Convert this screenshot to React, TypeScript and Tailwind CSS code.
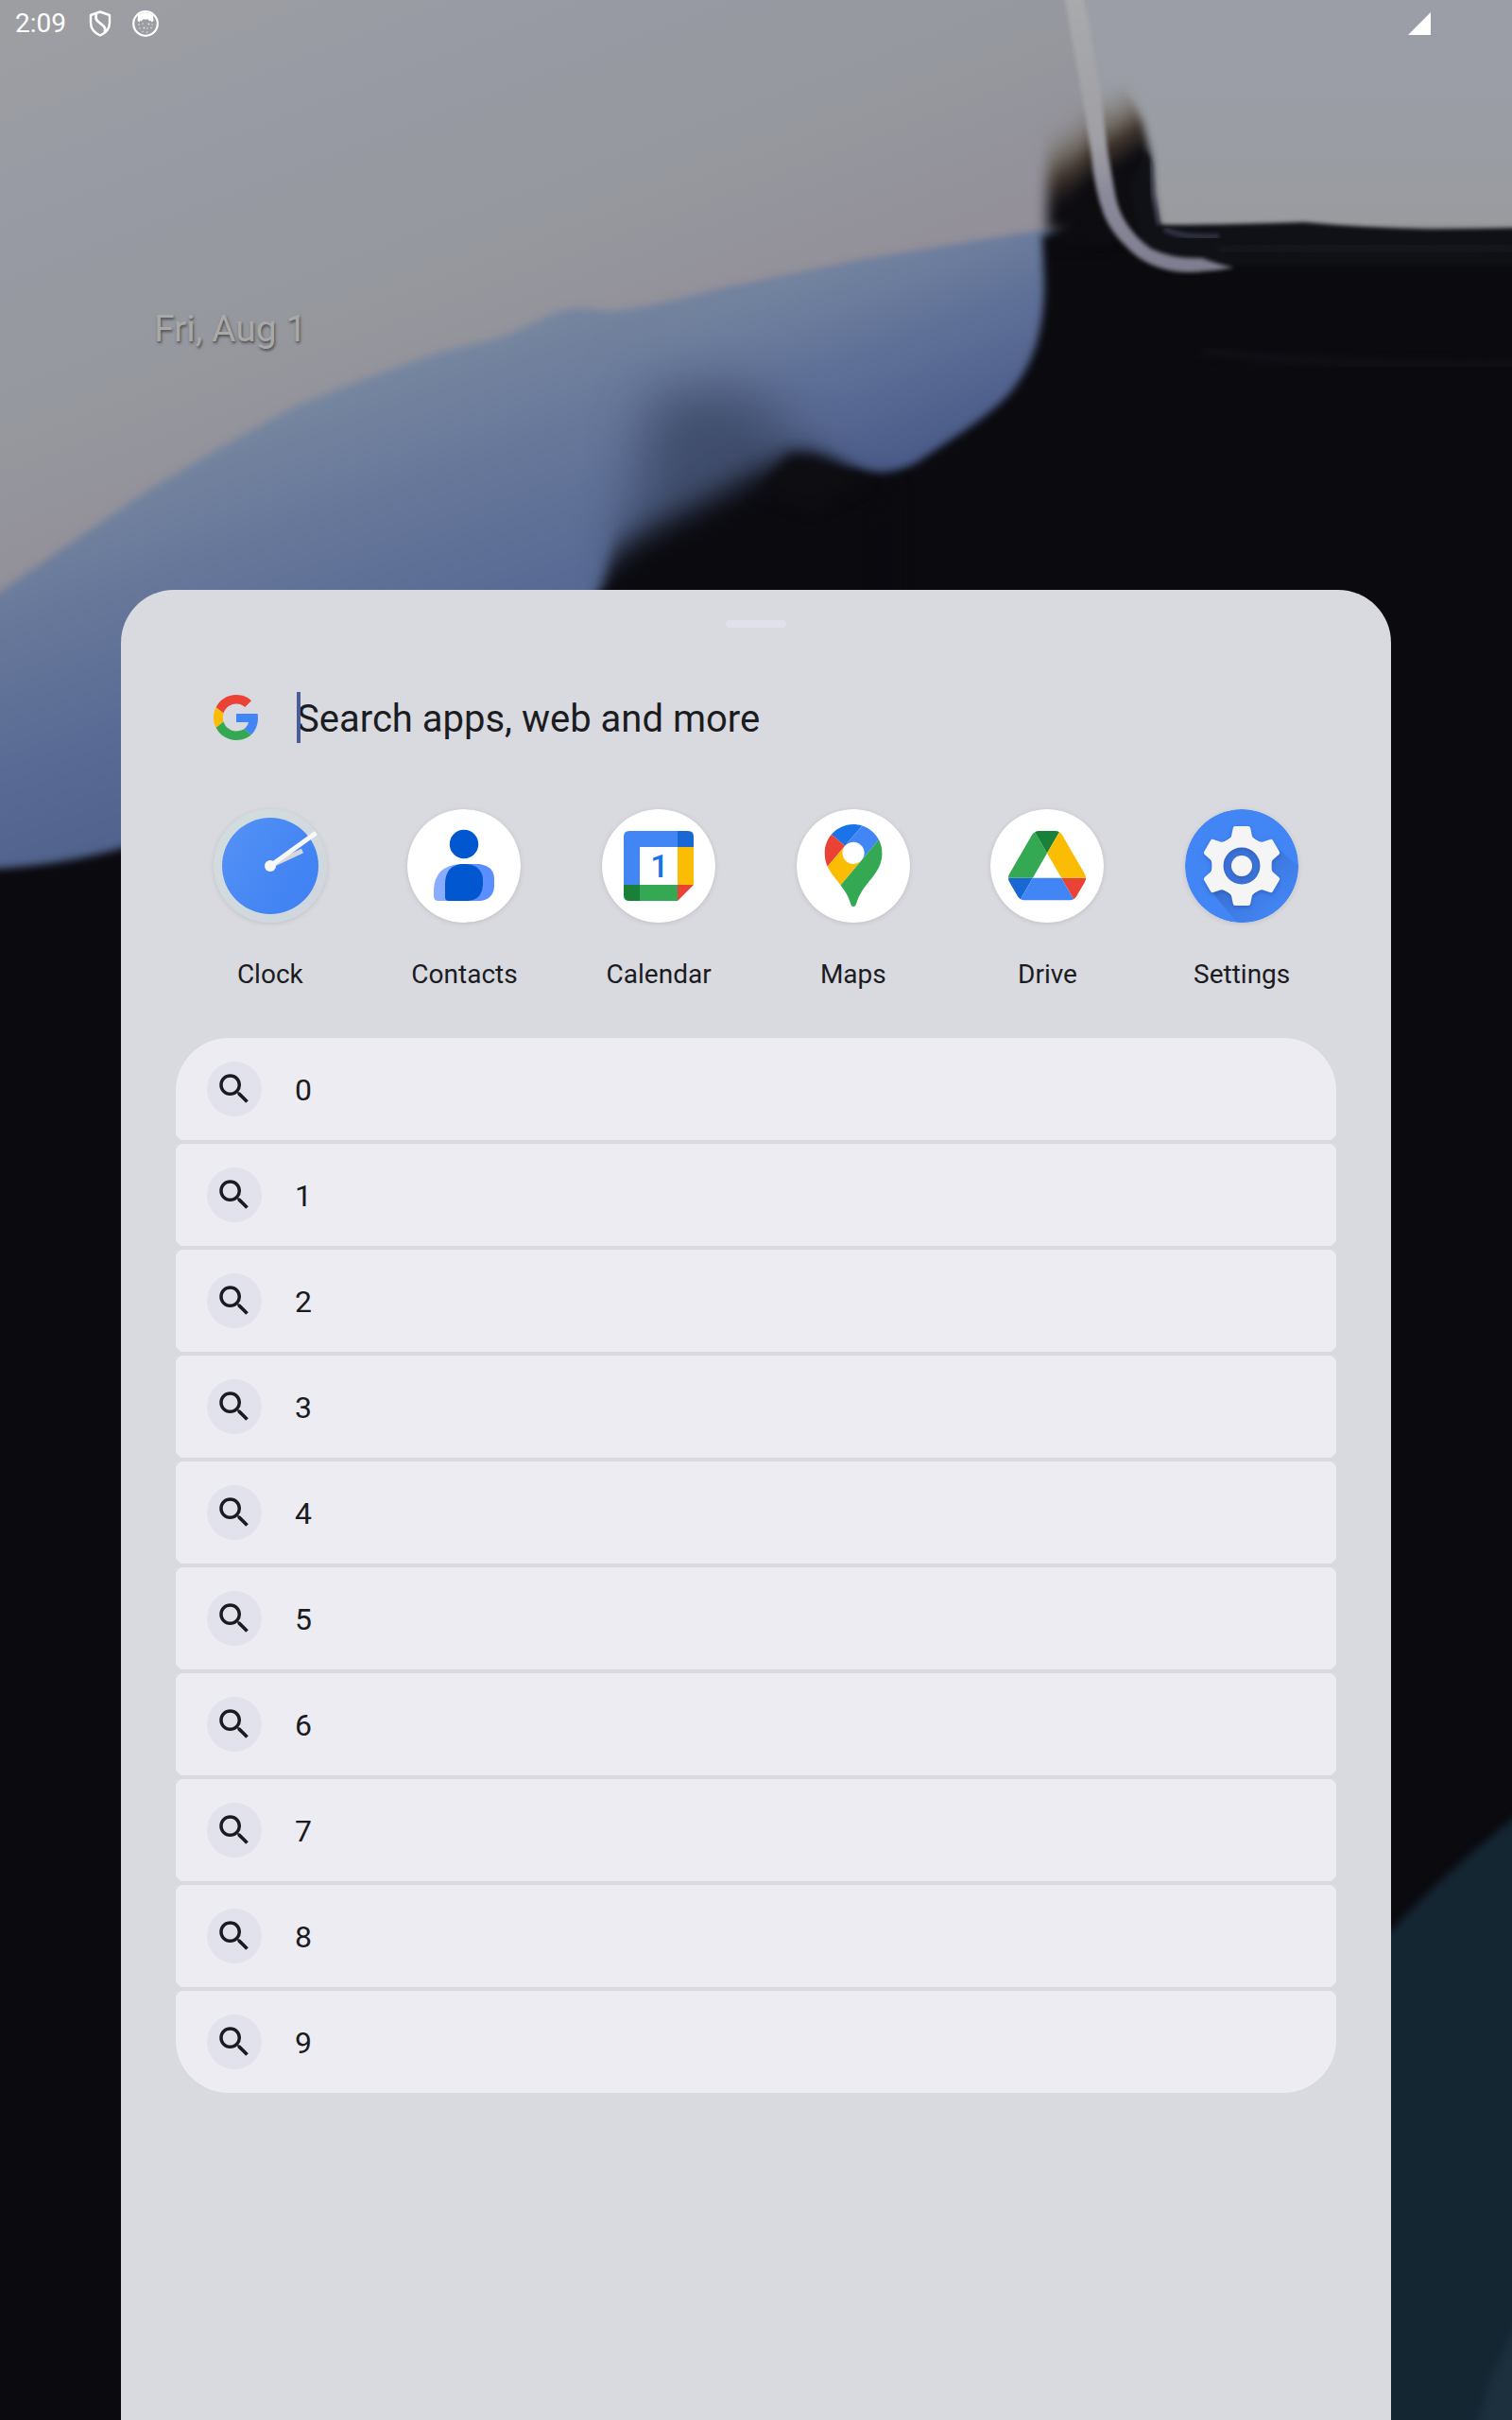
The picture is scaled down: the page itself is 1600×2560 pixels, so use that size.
import React from "react";

function Wallpaper() {
  return (
    <svg
      aria-hidden="true"
      className="absolute inset-0 h-full w-full"
      viewBox="0 0 1600 2560"
      preserveAspectRatio="xMidYMin slice"
      colorInterpolationFilters="sRGB"
    >
      <defs>
        <linearGradient id="haze" gradientUnits="userSpaceOnUse" x1="100" y1="0" x2="300" y2="520">
          <stop offset="0" stopColor="#9d9ea2" />
          <stop offset="0.3" stopColor="#989ba4" />
          <stop offset="0.75" stopColor="#95979d" />
          <stop offset="1" stopColor="#93909a" />
        </linearGradient>
        <linearGradient id="hazeRight" gradientUnits="userSpaceOnUse" x1="1350" y1="0" x2="1350" y2="240">
          <stop offset="0" stopColor="#9b9ea7" />
          <stop offset="0.6" stopColor="#9a9da4" />
          <stop offset="1" stopColor="#999b9f" />
        </linearGradient>
        <linearGradient id="blue" gradientUnits="userSpaceOnUse" x1="330" y1="420" x2="500" y2="900">
          <stop offset="0" stopColor="#76869f" />
          <stop offset="0.25" stopColor="#67779a" />
          <stop offset="0.5" stopColor="#5a6c95" />
          <stop offset="1" stopColor="#475a86" />
        </linearGradient>
        <linearGradient id="blueRight" gradientUnits="userSpaceOnUse" x1="870" y1="285" x2="950" y2="500">
          <stop offset="0" stopColor="#73849f" />
          <stop offset="0.45" stopColor="#5f7098" />
          <stop offset="1" stopColor="#4a5a88" />
        </linearGradient>
        <linearGradient id="blueFade" gradientUnits="userSpaceOnUse" x1="620" y1="0" x2="860" y2="0">
          <stop offset="0" stopColor="#fff" stopOpacity="0" />
          <stop offset="1" stopColor="#fff" />
        </linearGradient>
        <mask id="rightOnly" maskUnits="userSpaceOnUse" x="0" y="0" width="1600" height="1000">
          <rect width="1600" height="1000" fill="url(#blueFade)" />
        </mask>
        <linearGradient id="ember" gradientUnits="userSpaceOnUse" x1="1121" y1="124" x2="1163" y2="190">
          <stop offset="0" stopColor="#8f8e8e" stopOpacity="0" />
          <stop offset="0.4" stopColor="#6c6459" stopOpacity="0.65" />
          <stop offset="0.68" stopColor="#3c3129" stopOpacity="0.95" />
          <stop offset="1" stopColor="#0e0d12" />
        </linearGradient>
        <linearGradient id="streak" gradientUnits="userSpaceOnUse" x1="1140" y1="0" x2="1200" y2="290">
          <stop offset="0" stopColor="#a9aaac" />
          <stop offset="0.5" stopColor="#a0a0a5" />
          <stop offset="0.7" stopColor="#8b8a9a" />
          <stop offset="1" stopColor="#7f7e90" />
        </linearGradient>
        <filter id="b2" x="-10%" y="-10%" width="120%" height="120%"><feGaussianBlur stdDeviation="2" /></filter>
        <filter id="b4" x="-10%" y="-10%" width="120%" height="120%"><feGaussianBlur stdDeviation="4" /></filter>
        <filter id="b7" x="-50%" y="-50%" width="200%" height="200%"><feGaussianBlur stdDeviation="7" /></filter>
        <filter id="b16" x="-50%" y="-50%" width="200%" height="200%"><feGaussianBlur stdDeviation="16" /></filter>
        <filter id="b28" x="-50%" y="-50%" width="200%" height="200%"><feGaussianBlur stdDeviation="28" /></filter>
        <mask id="besideLobe" maskUnits="userSpaceOnUse" x="500" y="300" width="600" height="400">
          <path d="M620 660Q646 605 646 560L630 470V340H960V660Z" fill="#fff" filter="url(#b7)" />
        </mask>
      </defs>
      <rect width="1600" height="2560" fill="#0a0a0f" />
      <rect width="1600" height="700" fill="url(#haze)" />
      <rect x="1150" width="450" height="300" fill="url(#hazeRight)" />
      <path
        d="M-30 646L0 626L71 577L156 519L232 474L312 430Q400 394 469 372L527 358Q560 345 580 334Q600 325 616 326L647 330Q690 325 765 306L918 275L1120 242V960H-30Z"
        fill="url(#blue)"
        filter="url(#b4)"
      />
      <g mask="url(#rightOnly)">
        <path
          d="M580 336Q600 327 616 328L647 332Q690 327 765 308L918 277L1120 244V620H560Z"
          fill="url(#blueRight)"
          filter="url(#b4)"
        />
      </g>
      <path d="M690 420Q770 400 820 430L850 480L700 600L660 600Z" fill="#37435f" opacity="0.75" filter="url(#b28)" />
      <path
        d="M1103 250L1150 235L1228 245H1620V2600H-30V920Q70 918 160 888L610 650L634 628L700 600L800 550L870 500L905 496Q920 500 934 500Q950 499 969 490L1020 456Q1058 430 1071 413Q1106 370 1105 300Z"
        fill="#0a0a0f"
        filter="url(#b4)"
      />
      <g mask="url(#besideLobe)">
        <path
          d="M600 660L630 600L672 568L748 528L800 498L850 480L900 512L940 520V680H600Z"
          fill="#0a0a0f"
          filter="url(#b16)"
        />
        <path d="M835 480Q865 476 895 492L920 510L860 540L800 520Z" fill="#0d0d12" filter="url(#b7)" />
      </g>
      <path d="M1108 244V80H1170V250Z" fill="url(#ember)" filter="url(#b7)" />
      <path
        d="M1150 258L1150 80H1180Q1202 106 1210 132L1218 168L1220 205L1226 238L1240 256Z"
        fill="url(#ember)"
        filter="url(#b4)"
      />
      <path d="M1125 240L1160 205L1170 260H1112Z" fill="#0c0c11" filter="url(#b7)" />
      <path
        d="M1212 160L1217 168L1219 205L1227 238Q1300 238 1380 235Q1440 241 1510 243Q1570 243 1620 241V280H1215L1195 200Z"
        fill="#101116"
        filter="url(#b2)"
      />
      <path d="M1218 172L1220 205L1226 238" stroke="#45475a" strokeWidth="3" fill="none" filter="url(#b2)" />
      <path d="M1232 242Q1250 252 1290 250" stroke="#35384a" strokeWidth="5" fill="none" filter="url(#b2)" />
      <path d="M1290 266Q1450 256 1620 264" stroke="#16171b" strokeWidth="14" fill="none" filter="url(#b4)" />
      <path d="M1270 370Q1380 388 1620 386" stroke="#121318" strokeWidth="8" fill="none" filter="url(#b4)" />
      <path
        d="M1126 -5L1145 100L1155 165Q1158 200 1168 227Q1176 246 1191 260Q1214 286 1255 288Q1280 288 1306 283Q1290 280 1272 273Q1240 274 1218 263Q1186 240 1180 205L1172 160L1165 100L1147 -5Z"
        fill="url(#streak)"
        filter="url(#b2)"
      />
      <path d="M1440 2064L1472 2042Q1534 1975 1620 1909V2600H1440Z" fill="#152633" filter="url(#b4)" />
      <path d="M1562 2575Q1575 2500 1620 2440V2600Z" fill="#1c303d" filter="url(#b4)" />
    </svg>
  );
}

function StatusBar() {
  return (
    <header className="flex h-[50px] items-center pr-[86px] pl-4 text-white">
      <time className="text-[28px] leading-8">2:09</time>
      <svg aria-hidden="true" className="ml-6 h-7 w-6" viewBox="0 0 24 28" fill="none" stroke="#fff" strokeWidth="2.4">
        <path d="M12 1.500L22 5V13Q22 22 12 26.500Q2 22 2 13V5Z" strokeLinejoin="round" />
        <path d="M8 3.500Q6.500 9 9.500 11.500L15.500 16.500Q18.500 19.500 16.500 23" strokeWidth="2.800" />
      </svg>
      <svg aria-hidden="true" className="ml-[22px] size-7" viewBox="0 0 28 28">
        <circle cx="14" cy="14" r="12.8" fill="none" stroke="#fff" strokeWidth="2.2" />
        <path d="M6 5Q14 -1 22 5L22.500 11L20.500 12.500L19.500 10.500L18 11.500L17 9.500H11L10 11.500L8.500 10.500L7.500 12.500L5.500 11Z" fill="#fff" />
        <g fill="#fff" opacity="0.75">
          <circle cx="7" cy="15" r="0.8" /><circle cx="11" cy="14" r="0.7" /><circle cx="17.500" cy="14.500" r="0.9" />
          <circle cx="21" cy="15" r="0.7" /><circle cx="8" cy="19" r="0.7" /><circle cx="12.500" cy="18.500" r="0.9" />
          <circle cx="16" cy="19" r="0.8" /><circle cx="20" cy="18.500" r="0.8" /><circle cx="11" cy="22.500" r="0.7" />
          <circle cx="15.500" cy="23" r="0.8" />
        </g>
      </svg>
      <svg aria-hidden="true" className="ml-auto size-6" viewBox="0 0 24 24">
        <path d="M24 0V24H0Z" fill="#fff" />
      </svg>
    </header>
  );
}

function GoogleLogo() {
  return (
    <svg aria-hidden="true" className="size-12 shrink-0" viewBox="0 0 48 48">
      <path fill="#EA4335" d="M24 9.5c3.54 0 6.71 1.22 9.21 3.6l6.85-6.85C35.9 2.38 30.47 0 24 0 14.62 0 6.51 5.38 2.56 13.22l7.98 6.19C12.43 13.72 17.74 9.5 24 9.5z" />
      <path fill="#4285F4" d="M46.98 24.55c0-1.57-.15-3.09-.38-4.55H24v9.02h12.94c-.58 2.96-2.26 5.48-4.78 7.18l7.73 6c4.51-4.18 7.09-10.36 7.09-17.65z" />
      <path fill="#FBBC05" d="M10.53 28.59c-.48-1.45-.76-2.99-.76-4.59s.27-3.14.76-4.59l-7.98-6.19C.92 16.46 0 20.12 0 24c0 3.88.92 7.54 2.56 10.78l7.97-6.19z" />
      <path fill="#34A853" d="M24 48c6.48 0 11.93-2.13 15.89-5.81l-7.73-6c-2.15 1.45-4.92 2.3-8.16 2.3-6.26 0-11.57-4.22-13.47-9.91l-7.98 6.19C6.51 42.62 14.62 48 24 48z" />
    </svg>
  );
}

function ClockIcon() {
  return (
    <>
      <defs>
        <linearGradient id="clockFace" x1="0" y1="0.2" x2="1" y2="0.8">
          <stop offset="0" stopColor="#5491f5" />
          <stop offset="0.5" stopColor="#4788f4" />
          <stop offset="1" stopColor="#4081f4" />
        </linearGradient>
        <linearGradient id="clockRing" x1="0" y1="0" x2="1" y2="1">
          <stop offset="0" stopColor="#d3dddd" />
          <stop offset="1" stopColor="#cfd6df" />
        </linearGradient>
      </defs>
      <circle cx="60" cy="60" r="60" fill="url(#clockRing)" />
      <circle cx="60" cy="60" r="51" fill="url(#clockFace)" />
      <path d="M60 60L94 44" stroke="#d6d7da" strokeWidth="5" />
      <path d="M60 60L108.500 25" stroke="#f8f8fa" strokeWidth="5" />
      <circle cx="60" cy="60" r="6" fill="#f8f8fa" />
    </>
  );
}

function ContactsIcon() {
  return (
    <>
      <circle cx="60" cy="60" r="60" fill="#fff" />
      <path d="M56 58H60V97H33Q28 97 28 92V85Q29 60 56 58Z" fill="#8aacff" />
      <path d="M60 58H76Q92 60 92 74V82Q91 96 76 97H60Z" fill="#5b8fff" />
      <path d="M62 58Q80 59 80 76V80Q79 96 64 97H44Q40 97 40 93V78Q41 59 58 58Z" fill="#0057cf" />
      <circle cx="60" cy="37" r="15.2" fill="#0057cf" />
    </>
  );
}

function CalendarIcon() {
  return (
    <>
      <circle cx="60" cy="60" r="60" fill="#fff" />
      <path d="M29 23H80V40H40V80H23V29Q23 23 29 23Z" fill="#4285f4" />
      <path d="M80 23H91Q97 23 97 29V40H80Z" fill="#1967d2" />
      <path d="M80 40H97V80H80Z" fill="#fbbc04" />
      <path d="M40 80H80V97H40Z" fill="#34a853" />
      <path d="M23 80H40V97H29Q23 97 23 91Z" fill="#188038" />
      <path d="M80 80H97L80 97Z" fill="#ea4335" />
      <text x="61" y="72" textAnchor="middle" fontSize="34" fontWeight="500" fill="#1a73e8">1</text>
    </>
  );
}

function MapsIcon() {
  return (
    <>
      <circle cx="60" cy="60" r="60" fill="#fff" />
      <g transform="translate(29.700 16) scale(0.657)">
        <path fill="#1a73e8" d="M60.2 2.2C55.8.8 51 0 46.1 0 32 0 19.3 6.4 10.8 16.5l21.8 18.3L60.2 2.2z" />
        <path fill="#ea4335" d="M10.8 16.5C4.1 24.5 0 34.9 0 46.1c0 8.7 1.7 15.7 4.6 22l28-33.3-21.8-18.3z" />
        <path fill="#4285f4" d="M46.2 28.5c9.8 0 17.7 7.9 17.7 17.7 0 4.3-1.6 8.3-4.2 11.4 0 0 13.9-16.6 27.5-32.7-5.6-10.8-15.3-19-27-22.7L32.6 34.8c3.3-3.8 8.1-6.3 13.6-6.3" />
        <path fill="#fbbc04" d="M46.2 63.8c-9.8 0-17.7-7.9-17.7-17.7 0-4.3 1.5-8.3 4.1-11.3l-28 33.3c4.8 10.6 12.8 19.2 21 29.9l34.1-40.5c-3.3 3.9-8.1 6.3-13.5 6.3" />
        <path fill="#34a853" d="M59.1 109.2c15.4-24.1 33.3-35 33.3-63 0-7.7-1.9-14.9-5.2-21.3L25.6 98c2.6 3.4 5.3 7.3 7.9 11.3 9.4 14.5 6.8 23.1 12.8 23.1s3.4-8.7 12.8-23.2" />
      </g>
    </>
  );
}

function DriveIcon() {
  return (
    <>
      <circle cx="60" cy="60" r="60" fill="#fff" />
      <g transform="translate(19 23) scale(0.94)">
        <path fill="#1967d2" d="M6.6 66.85l3.85 6.65c.8 1.4 1.95 2.5 3.3 3.3L27.5 53H0c0 1.55.4 3.1 1.2 4.5z" />
        <path fill="#34a853" d="m43.65 25-13.75-23.8c-1.35.8-2.5 1.9-3.3 3.3l-25.4 44a9.06 9.06 0 0 0 -1.2 4.5h27.5z" />
        <path fill="#ea4335" d="M73.55 76.8c1.35-.8 2.5-1.9 3.3-3.3l9.25-16c.8-1.4 1.2-2.95 1.2-4.5H59.8z" />
        <path fill="#188038" d="m43.65 25 13.75-23.8c-1.35-.8-2.9-1.2-4.5-1.2h-18.5c-1.6 0-3.15.45-4.5 1.2z" />
        <path fill="#4285f4" d="m59.8 53h-32.3l-13.75 23.8c1.35.8 2.9 1.2 4.5 1.2h50.8c1.6 0 3.15-.45 4.5-1.2z" />
        <path fill="#fbbc04" d="m73.4 26.5-12.7-22c-.8-1.4-1.95-2.5-3.3-3.3l-13.75 23.8 16.15 28h27.45c0-1.55-.4-3.1-1.2-4.5z" />
      </g>
    </>
  );
}

function SettingsIcon() {
  return (
    <>
      <defs>
        <linearGradient id="gearCast" gradientUnits="userSpaceOnUse" x1="60" y1="60" x2="105" y2="105">
          <stop offset="0" stopColor="#3a6fd0" />
          <stop offset="1" stopColor="#4285f4" stopOpacity="0.6" />
        </linearGradient>
        <clipPath id="gearDisc"><circle cx="60" cy="60" r="60" /></clipPath>
        <filter id="gearShade" x="-20%" y="-20%" width="140%" height="140%" colorInterpolationFilters="sRGB">
          <feDropShadow dx="0" dy="2" stdDeviation="2" floodColor="#1b3f86" floodOpacity="0.35" />
        </filter>
      </defs>
      <circle cx="60" cy="60" r="60" fill="#4285f4" />
      <path d="M99 42L140 78V140H72L27 86Z" fill="url(#gearCast)" clipPath="url(#gearDisc)" />
      <circle cx="60" cy="60" r="22" fill="#3c73d9" />
      <g filter="url(#gearShade)" fill="#f5f5f5" transform="translate(60 60)">
        {[0, 60, 120, 180, 240, 300].map((a) => (
          <path
            key={a}
            transform={`rotate(${a})`}
            d="M-7 -42H7Q8.800 -42 9.200 -40L11 -31.500Q11.500 -29.500 18.500 -25.500L9.500 -18Q0 -23 -9.500 -18L-18.500 -25.500Q-11.500 -29.500 -11 -31.500L-9.200 -40Q-8.800 -42 -7 -42Z"
          />
        ))}
        <circle r="25.200" fill="none" stroke="#f5f5f5" strokeWidth="11.600" />
        <circle r="11" />
      </g>
    </>
  );
}

const apps = [
  { name: "Clock", Icon: ClockIcon },
  { name: "Contacts", Icon: ContactsIcon },
  { name: "Calendar", Icon: CalendarIcon },
  { name: "Maps", Icon: MapsIcon },
  { name: "Drive", Icon: DriveIcon },
  { name: "Settings", Icon: SettingsIcon },
];

const suggestions = ["0", "1", "2", "3", "4", "5", "6", "7", "8", "9"];

function SearchGlyph() {
  return (
    <svg aria-hidden="true" className="size-[42px]" viewBox="0 0 24 24" fill="#1a1b21">
      <path d="M15.5 14h-.79l-.28-.27A6.471 6.471 0 0 0 16 9.500 6.500 6.500 0 1 0 9.500 16c1.610 0 3.090-.59 4.230-1.570l.27.28v.79l5 4.990L20.490 19l-4.990-5zm-6 0C7.010 14 5 11.990 5 9.500S7.010 5 9.500 5 14 7.010 14 9.500 11.990 14 9.500 14z" />
    </svg>
  );
}

export default function App() {
  return (
    <div className="relative isolate flex min-h-screen flex-col overflow-hidden bg-[#0a0a0f] font-['Roboto',sans-serif]">
      <div className="absolute inset-0 -z-10">
        <Wallpaper />
      </div>
      <StatusBar />
      <p className="mt-[274px] ml-[163px] text-[39px] leading-12 text-[#a9a9a8] [text-shadow:1px_2px_3px_rgba(0,0,0,0.5)]">
        Fri, Aug 1
      </p>
      <main className="mx-[8%] mt-[252px] flex flex-1 flex-col rounded-t-[56px] bg-[#d9dadf] px-[58px] pt-8 text-[#1b1c1f]">
        <div className="h-2 w-16 self-center rounded bg-[#e1e1ec]" />
        <form className="mt-[68px] flex h-[54px] items-center gap-10 px-10" role="search">
          <GoogleLogo />
          <div className="relative flex flex-1 items-center">
            <span aria-hidden="true" className="absolute top-0 left-0 h-[54px] w-1 bg-[#4a5d97]" />
            <input
              type="text"
              aria-label="Search apps, web and more"
              placeholder="Search apps, web and more"
              className="h-[54px] w-full bg-transparent pt-1 text-[40px] outline-none placeholder:text-[#1b1c1f] placeholder:opacity-100"
            />
          </div>
        </form>
        <nav aria-label="Suggested apps" className="-mx-[3px] mt-[70px] grid grid-cols-6">
          {apps.map(({ name, Icon }) => (
            <button key={name} type="button" className="flex flex-col items-center gap-[39px]">
              <svg
                aria-hidden="true"
                className="size-[120px] rounded-full shadow-[0_1px_5px_rgba(60,50,70,0.15)]"
                viewBox="0 0 120 120"
              >
                <Icon />
              </svg>
              <span className="text-[28px] leading-8">{name}</span>
            </button>
          ))}
        </nav>
        <ul className="mt-[51px] flex flex-col gap-1 pb-16">
          {suggestions.map((s) => (
            <li key={s} className="group">
              <button
                type="button"
                className="flex h-[108px] w-full items-center gap-[35px] rounded-lg bg-[#edecf3] px-[33px] text-left text-[#1a1b21] group-first:rounded-t-[56px] group-last:rounded-b-[56px]"
              >
                <span className="flex size-[58px] items-center justify-center rounded-full bg-[#e2e2ec]">
                  <SearchGlyph />
                </span>
                <span className="pt-0.5 text-[32px] leading-10">{s}</span>
              </button>
            </li>
          ))}
        </ul>
      </main>
    </div>
  );
}
